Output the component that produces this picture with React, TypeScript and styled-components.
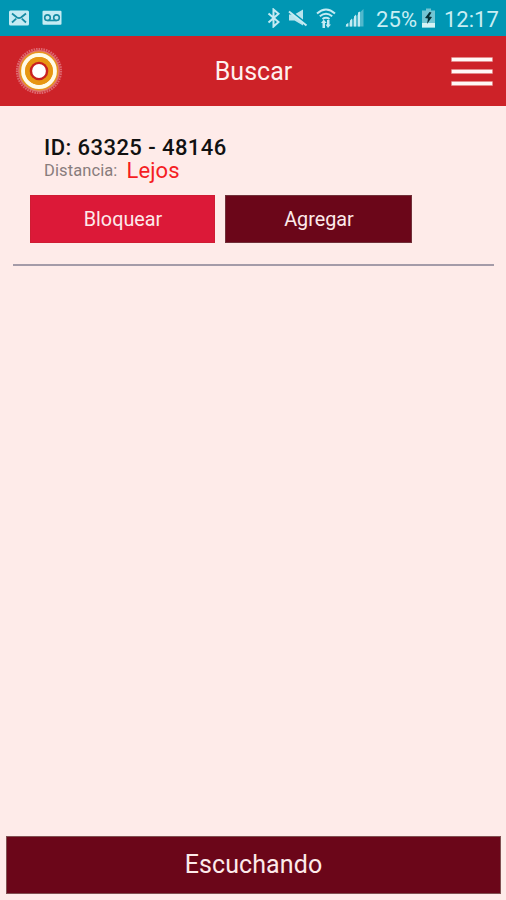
import React from 'react';
import styled, { createGlobalStyle } from 'styled-components';

const GlobalStyle = createGlobalStyle`
  * { box-sizing: border-box; }
  body { margin: 0; background: #feebe9; font-family: Roboto, sans-serif; }
`;

const Screen = styled.div`
  width: 506px;
  height: 900px;
  display: flex;
  flex-direction: column;
  background: #feebe9;
`;

const StatusBar = styled.div`
  height: 36px;
  padding: 0 7px 0 9px;
  display: flex;
  align-items: center;
  background: #0096b3;
  color: #c9eef4;
`;

const StatusIcon = styled.svg<{ $gap?: number }>`
  flex: none;
  display: block;
  margin-right: ${({ $gap = 0 }) => $gap}px;
`;

const Spacer = styled.div`
  flex: 1;
`;

const StatusText = styled.span<{ $width: number; $spacing?: number }>`
  flex: none;
  width: ${({ $width }) => $width}px;
  font-size: 22px;
  line-height: 36px;
  padding-top: 3px;
  letter-spacing: ${({ $spacing = 0 }) => $spacing}px;
  white-space: nowrap;
`;

const Header = styled.header`
  height: 70px;
  padding: 0 13px 0 15px;
  display: grid;
  grid-template-columns: 48px 1fr 42px;
  align-items: center;
  background: #cd2228;
`;

const Title = styled.h1`
  margin: 0;
  padding: 1px 7px 0 0;
  text-align: center;
  font-size: 25px;
  font-weight: 400;
  line-height: 30px;
  color: #fff0ee;
`;

const MenuButton = styled.button`
  width: 42px;
  height: 29px;
  padding: 0;
  border: 0;
  background: none;
  display: flex;
  flex-direction: column;
  justify-content: space-between;
`;

const MenuBar = styled.span`
  width: 42px;
  height: 5px;
  border: 0.5px solid #e58b8b;
  border-radius: 1px;
  background: #fff8f6;
`;

const Main = styled.main`
  flex: 1;
  padding: 0 12px 0 13px;
`;

const Device = styled.section`
  height: 160px;
  padding: 29px 0 0 17px;
  border-bottom: 2px solid #a49ba8;
`;

const DeviceId = styled.div`
  padding-left: 14px;
  font-size: 22px;
  font-weight: 500;
  line-height: 25px;
  letter-spacing: 0.43px;
  color: #111;
`;

const Distance = styled.div`
  display: flex;
  align-items: flex-start;
  gap: 9px;
  height: 35px;
  padding-left: 14px;
  line-height: 21px;
`;

const DistanceLabel = styled.span`
  font-size: 16.5px;
  letter-spacing: 0.1px;
  color: #887c7c;
`;

const DistanceValue = styled.span`
  font-size: 22px;
  letter-spacing: 0.1px;
  color: #f51d23;
`;

const Actions = styled.div`
  display: flex;
  gap: 10px;
`;

const Button = styled.button<{ $color: string; $edge: string; $width: number }>`
  width: ${({ $width }) => $width}px;
  height: 48px;
  padding: 1px 0 0 1px;
  border: 1px solid ${({ $edge }) => $edge};
  background: ${({ $color }) => $color};
  color: #fdeaea;
  font: 400 19.8px/45px Roboto, sans-serif;
`;

const Footer = styled.footer`
  padding: 0 5px 6px 6px;
`;

const ListenButton = styled(Button)`
  width: 100%;
  height: 58px;
  padding: 0;
  font-size: 25px;
  line-height: 54px;
  letter-spacing: 0.1px;
`;

const Logo = () => (
  <svg width="48" height="48" viewBox="0 0 48 48" aria-hidden="true">
    <circle cx="24" cy="24" r="22" fill="none" stroke="#dd6870" strokeWidth="2.2" strokeDasharray="1.6 0.9" />
    <circle cx="24" cy="24" r="20.9" fill="#df7470" />
    <circle cx="24" cy="24" r="19.4" fill="#e8961c" />
    <circle cx="24" cy="24" r="15.9" fill="none" stroke="#fffbe8" strokeWidth="4" />
    <circle cx="24" cy="24" r="13.9" fill="#e79612" />
    <circle cx="24" cy="24" r="9.3" fill="#c9201f" />
    <circle cx="24" cy="24" r="6.9" fill="#fff" />
  </svg>
);

const App = () => (
  <>
    <GlobalStyle />
    <Screen>
      <StatusBar>
        <StatusIcon width="20" height="16" viewBox="0 0 20 16" $gap={13}>
          <rect width="20" height="15" y=".5" rx="1.5" fill="#c5ebf3" />
          <path d="M3 3.5 8 7.5q2 1.3 4 0l5-4M3 12.5l4.2-3.8M17 12.5l-4.2-3.8" fill="none" stroke="#168ca4" strokeWidth="1.8" />
        </StatusIcon>
        <StatusIcon width="20" height="16" viewBox="0 0 20 16">
          <rect x=".5" y=".8" width="19" height="14" rx="1" fill="#c5ebf3" />
          <path d="M5.5 10.5h9" stroke="#168ca4" strokeWidth="1.6" />
          <circle cx="5.5" cy="7.7" r="2.8" fill="none" stroke="#168ca4" strokeWidth="1.6" />
          <circle cx="14.5" cy="7.7" r="2.8" fill="none" stroke="#168ca4" strokeWidth="1.6" />
        </StatusIcon>
        <Spacer />
        <StatusIcon width="14" height="20" viewBox="0 0 14 20" $gap={7}>
          <path d="m1.5 5.5 10 8.5-5 4.5v-17l5 4.3-10 8.7" fill="none" stroke="#c5ebf3" strokeWidth="2" />
        </StatusIcon>
        <StatusIcon width="20" height="20" viewBox="0 0 20 20" $gap={8}>
          <path d="M1 6.5h5.5L15 1.5v16l-8.5-5H1z" fill="#b7e4ed" />
          <path d="m2.5 3 15.5 12.4" stroke="#0096b3" strokeWidth="2" />
          <path d="m1 3.5 17.5 14" stroke="#c5ebf3" strokeWidth="2" />
        </StatusIcon>
        <StatusIcon width="20" height="22" viewBox="0 0 20 22" $gap={9}>
          <path d="M1 6.5q9-8 18 0M3.8 9.3q6.2-5 12.4 0M6.5 12q3.5-2.5 7 0" fill="none" stroke="#c5ebf3" strokeWidth="2" />
          <path d="m7.7 12.5 3 3.5H9v5H6.5v-5H5zM12 21l-2.5-3.5H11V13h2.5v4.5H15z" fill="#c5ebf3" />
        </StatusIcon>
        <StatusIcon width="19" height="20" viewBox="0 0 19 20" $gap={12}>
          <path d="M0 18.5 18.5 1v17.5z" fill="#51b8cc" />
          <path d="M1 18.5v-2l2-1.5v3.5zM5 18.5v-6l2-2v8zM9 18.5v-10l2-2v12zM13 18.5v-14l2-1v15z" fill="#c5ebf3" />
        </StatusIcon>
        <StatusText $width={46} $spacing={0.1}>25%</StatusText>
        <StatusIcon width="13" height="20" viewBox="0 0 13 20" $gap={9}>
          <path d="M0 2.5h4V.5h5v2h4v17H0z" fill="#72c5d3" />
          <path d="M0 15h13v4.5H0z" fill="#d6f3f5" />
          <path d="M7.5 4 3 10l3 .5-1 5.5 5-7-3-.5 2.5-4z" fill="#062e34" />
        </StatusIcon>
        <StatusText $width={55}>12:17</StatusText>
      </StatusBar>
      <Header>
        <Logo />
        <Title>Buscar</Title>
        <MenuButton aria-label="Menú"><MenuBar /><MenuBar /><MenuBar /></MenuButton>
      </Header>
      <Main>
        <Device>
          <DeviceId>ID: 63325 - 48146</DeviceId>
          <Distance>
            <DistanceLabel>Distancia:</DistanceLabel>
            <DistanceValue>Lejos</DistanceValue>
          </Distance>
          <Actions>
            <Button $color="#dc1938" $edge="#cf1c33" $width={185}>Bloquear</Button>
            <Button $color="#6b0619" $edge="#713039" $width={187}>Agregar</Button>
          </Actions>
        </Device>
      </Main>
      <Footer>
        <ListenButton $color="#6b0619" $edge="#805052" $width={495}>Escuchando</ListenButton>
      </Footer>
    </Screen>
  </>
);

export default App;
